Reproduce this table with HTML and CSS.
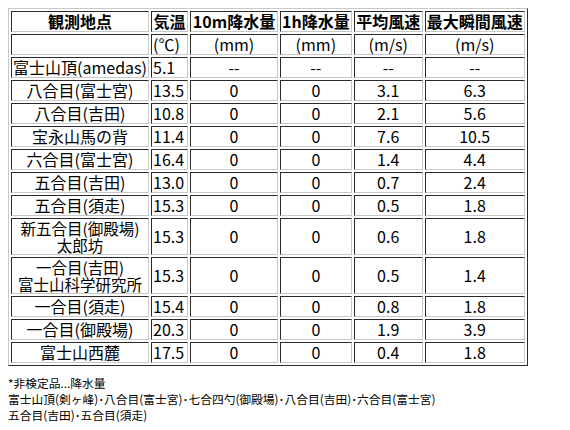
FILE: index.html
```html
<!DOCTYPE html>
<html lang="ja">
<head>
<meta charset="utf-8">
<link rel="stylesheet" href="styles.css">
</head>
<body>
<table class="obs">
<tr><th class="c1">観測地点</th><th class="c2">気温</th><th class="c3">10m降水量</th><th class="c4">1h降水量</th><th class="c5">平均風速</th><th class="c6">最大瞬間風速</th></tr>
<tr><td></td><td class="t">(℃)</td><td>(mm)</td><td>(mm)</td><td>(m/s)</td><td>(m/s)</td></tr>
<tr><td>富士山頂(amedas)</td><td class="t">5.1</td><td>--</td><td>--</td><td>--</td><td>--</td></tr>
<tr><td>八合目(富士宮)</td><td class="t">13.5</td><td>0</td><td>0</td><td>3.1</td><td>6.3</td></tr>
<tr><td>八合目(吉田)</td><td class="t">10.8</td><td>0</td><td>0</td><td>2.1</td><td>5.6</td></tr>
<tr><td>宝永山馬の背</td><td class="t">11.4</td><td>0</td><td>0</td><td>7.6</td><td>10.5</td></tr>
<tr><td>六合目(富士宮)</td><td class="t">16.4</td><td>0</td><td>0</td><td>1.4</td><td>4.4</td></tr>
<tr><td>五合目(吉田)</td><td class="t">13.0</td><td>0</td><td>0</td><td>0.7</td><td>2.4</td></tr>
<tr><td>五合目(須走)</td><td class="t">15.3</td><td>0</td><td>0</td><td>0.5</td><td>1.8</td></tr>
<tr><td class="two">新五合目(御殿場)<br>太郎坊</td><td class="t">15.3</td><td>0</td><td>0</td><td>0.6</td><td>1.8</td></tr>
<tr><td class="two">一合目(吉田)<br>富士山科学研究所</td><td class="t">15.3</td><td>0</td><td>0</td><td>0.5</td><td>1.4</td></tr>
<tr><td>一合目(須走)</td><td class="t">15.4</td><td>0</td><td>0</td><td>0.8</td><td>1.8</td></tr>
<tr><td>一合目(御殿場)</td><td class="t">20.3</td><td>0</td><td>0</td><td>1.9</td><td>3.9</td></tr>
<tr><td>富士山西麓</td><td class="t">17.5</td><td>0</td><td>0</td><td>0.4</td><td>1.8</td></tr>
</table>
<div class="note">
<div>*非検定品...降水量</div>
<div>富士山頂(剣ヶ峰)･八合目(富士宮)･七合四勺(御殿場)･八合目(吉田)･六合目(富士宮)</div>
<div>五合目(吉田)･五合目(須走)</div>
</div>
</body>
</html>
```

FILE: styles.css
```css
html, body {
  background: #ffffff;
}
body {
  margin: 8px;
  font-family: "Noto Sans CJK JP", "Noto Sans", sans-serif;
  color: #000000;
}
.obs {
  border-collapse: separate;
  border-spacing: 2px;
  border-style: solid;
  border-width: 1px;
  border-color: #c8c8c8 #2a2a2a #2a2a2a #c8c8c8;
  font-size: 16px;
  line-height: 17px;
}
.obs th, .obs td {
  border-style: solid;
  border-width: 1px;
  border-color: #2a2a2a #c8c8c8 #c8c8c8 #2a2a2a;
  padding: 1px;
  text-align: center;
  vertical-align: middle;
  white-space: nowrap;
}
.obs th {
  font-weight: bold;
}
.obs td.t {
  text-align: left;
}
.obs td.two {
  font-size: 15.5px;
  line-height: 16.5px;
}
.c1 { width: 134px; }
.c2 { width: 33px; }
.c3 { width: 84px; }
.c4 { width: 66px; }
.c5 { width: 65px; }
.c6 { width: 95px; }
.note {
  margin-top: 9px;
  font-size: 11.75px;
  line-height: 16px;
}
```
